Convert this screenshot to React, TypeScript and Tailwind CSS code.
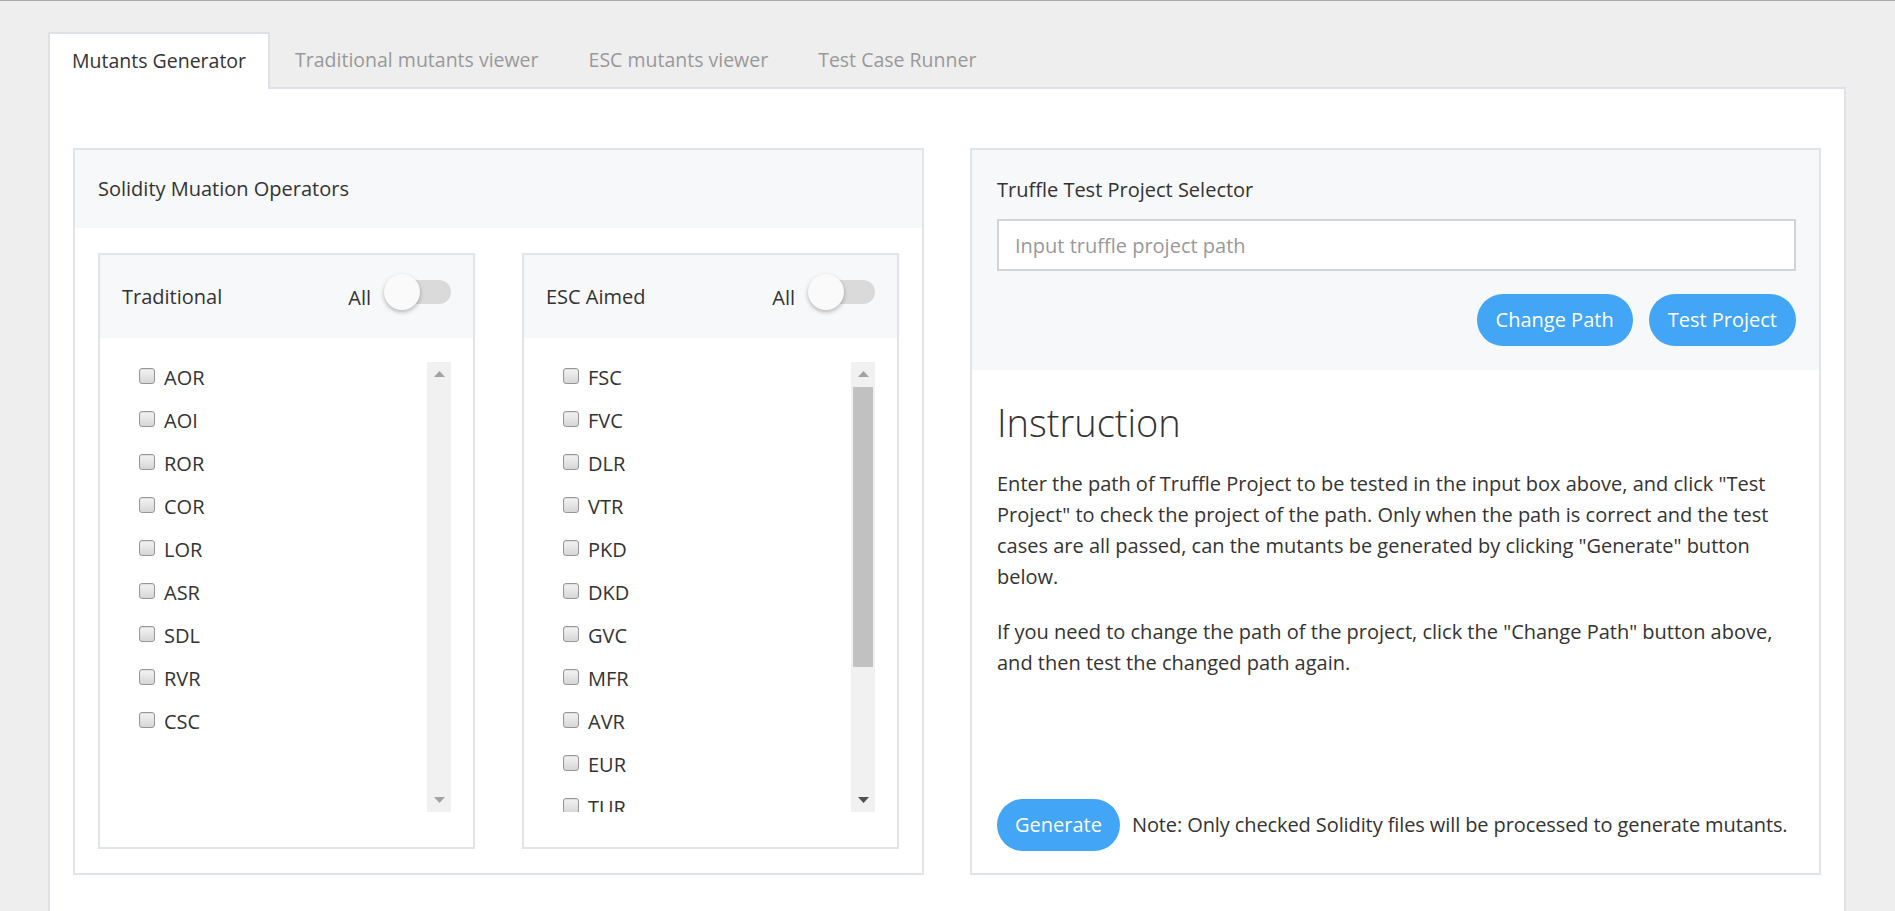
const TABS = ['Mutants Generator', 'Traditional mutants viewer', 'ESC mutants viewer', 'Test Case Runner']
const TRADITIONAL = ['AOR', 'AOI', 'ROR', 'COR', 'LOR', 'ASR', 'SDL', 'RVR', 'CSC']
const ESC_AIMED = ['FSC', 'FVC', 'DLR', 'VTR', 'PKD', 'DKD', 'GVC', 'MFR', 'AVR', 'EUR', 'TUR']

function Toggle() {
  return (
    <div className="relative mb-[10px] h-[24px] w-[66px] rounded-full bg-[#dadada]">
      <div className="absolute left-[-1px] top-[-6px] h-[36px] w-[36px] rounded-full bg-[#fafafa] shadow-[0_2px_4px_rgba(0,0,0,0.28)]" />
    </div>
  )
}

function Checkbox() {
  return (
    <span className="mb-[4px] block h-[16px] w-[16px] shrink-0 rounded-[3px] border border-[#979797] bg-gradient-to-b from-[#f4f4f4] to-[#d6d6d6] shadow-[inset_0_1px_1px_rgba(0,0,0,0.08)]" />
  )
}

function ScrollBar({ thumb, darkDown }: { thumb?: boolean; darkDown?: boolean }) {
  return (
    <div className="flex w-[24px] flex-col bg-[#f1f1f1]">
      <div className="flex h-[24px] items-center justify-center">
        <svg width="11" height="6" viewBox="0 0 11 6">
          <path d="M5.5 0 L11 6 L0 6 Z" fill="#a3a3a3" />
        </svg>
      </div>
      <div className="flex-1 px-[2px]">
        {thumb && <div className="mt-[1px] h-[280px] bg-[#c1c1c1]" />}
      </div>
      <div className="flex h-[24px] items-center justify-center">
        <svg width="11" height="6" viewBox="0 0 11 6">
          <path d="M0 0 L11 0 L5.5 6 Z" fill={darkDown ? '#505050' : '#a3a3a3'} />
        </svg>
      </div>
    </div>
  )
}

function OperatorBox({ title, items, scrolled }: { title: string; items: string[]; scrolled?: boolean }) {
  return (
    <div className="flex flex-col border-2 border-[#e1e5ea]">
      <div className="flex h-[83px] items-center justify-between bg-[#f7f8fa] px-[22px]">
        <span>{title}</span>
        <div className="flex items-start gap-[14px]">
          <span className="pt-[4px] leading-[27px]">All</span>
          <Toggle />
        </div>
      </div>
      <div className="flex px-[22px] pb-[35px] pt-[24px]">
        <div className="h-[450px] flex-1 overflow-hidden">
          <ul className="-mt-[6px] pl-[17px]">
            {items.map((item) => (
              <li key={item} className="flex h-[43px] items-center gap-[9px]">
                <Checkbox />
                <span>{item}</span>
              </li>
            ))}
          </ul>
        </div>
        <ScrollBar thumb={scrolled} darkDown={scrolled} />
      </div>
    </div>
  )
}

export default function App() {
  return (
    <div className="h-screen overflow-hidden border-t border-[#ababab] bg-[#eeeeee] pl-[48px] pr-[49px] pt-[31px] font-['Open_Sans',sans-serif] text-[20px] text-[#333]">
      {/* Tabs */}
      <div className="flex text-[19.5px]">
        {TABS.map((tab, i) => (
          <div
            key={tab}
            className={
              i === 0
                ? 'relative z-10 -mb-[2px] flex h-[57px] items-center border-2 border-b-0 border-[#dee2e6] bg-white px-[22px] pb-[2px] text-[#333]'
                : 'flex h-[55px] items-center border-2 border-transparent px-[23px] text-[#999]'
            }
          >
            {tab}
          </div>
        ))}
      </div>

      {/* Panel */}
      <div className="border-2 border-[#dee2e6] bg-white px-[23px] pb-[60px] pt-[59px]">
        <div className="grid grid-cols-2 gap-[46px]">
          {/* Left card */}
          <div className="flex flex-col border-2 border-[#e1e5ea]">
            <div className="flex h-[78px] items-center bg-[#f7f8fa] px-[23px]">Solidity Muation Operators</div>
            <div className="grid grid-cols-2 gap-[47px] px-[23px] pb-[24px] pt-[25px]">
              <OperatorBox title="Traditional" items={TRADITIONAL} />
              <OperatorBox title="ESC Aimed" items={ESC_AIMED} scrolled />
            </div>
          </div>

          {/* Right card */}
          <div className="flex flex-col border-2 border-[#e1e5ea]">
            <div className="bg-[#f7f8fa] pb-[24px] pl-[25px] pr-[23px] pt-[26px]">
              <div className="leading-[28px]">Truffle Test Project Selector</div>
              <input
                placeholder="Input truffle project path"
                className="mt-[15px] block h-[52px] w-full border-2 border-[#d0d4d9] bg-white px-[16px] text-[20px] outline-none placeholder:text-[#999]"
              />
              <div className="mt-[23px] flex justify-end gap-[16px]">
                <button className="h-[52px] rounded-full bg-[#42a5f5] px-[19px] text-white">Change Path</button>
                <button className="h-[52px] rounded-full bg-[#42a5f5] px-[19px] text-white">Test Project</button>
              </div>
            </div>
            <div className="flex flex-1 flex-col pb-[22px] pl-[25px] pr-[23px] pt-[29px]">
              <h1 className="text-[38px] font-light leading-[46px]">Instruction</h1>
              <p className="mt-[23px] leading-[31px]">
                Enter the path of Truffle Project to be tested in the input box above, and click "Test Project" to
                check the project of the path. Only when the path is correct and the test cases are all passed, can
                the mutants be generated by clicking "Generate" button below.
              </p>
              <p className="mt-[24px] leading-[31px]">
                If you need to change the path of the project, click the "Change Path" button above, and then test the
                changed path again.
              </p>
              <div className="mt-auto flex items-center gap-[12px]">
                <button className="h-[52px] shrink-0 rounded-full bg-[#42a5f5] px-[18px] text-white">Generate</button>
                <span className="whitespace-nowrap tracking-[-0.1px]">
                  Note: Only checked Solidity files will be processed to generate mutants.
                </span>
              </div>
            </div>
          </div>
        </div>
      </div>
    </div>
  )
}
